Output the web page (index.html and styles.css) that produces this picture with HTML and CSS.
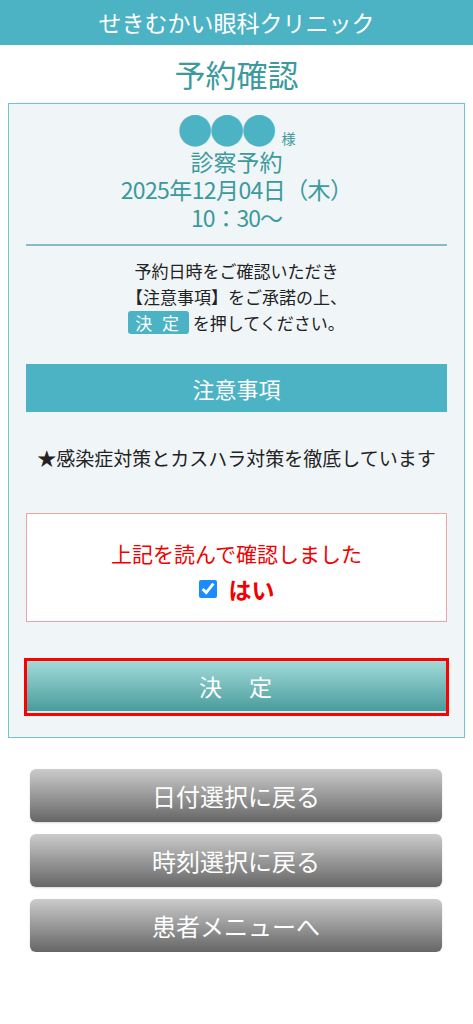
FILE: index.html
```html
<!DOCTYPE html>
<html lang="ja">
<head>
  <meta charset="UTF-8">
  <meta name="viewport" content="width=device-width, initial-scale=1.0">
  <title>予約確認</title>
  <link rel="stylesheet" href="styles.css">
</head>
<body>
  <header>せきむかい眼科クリニック</header>

  <h1 class="page-title">予約確認</h1>

  <main class="card">
    <!-- reservation summary -->
    <div class="summary">
      <p class="name"><span class="dots">●●●</span><span class="sama">様</span></p>
      <p>診察予約</p>
      <p class="date">2025年12月04日（木）</p>
      <p class="time">10：30～</p>
    </div>

    <hr class="divider">

    <p class="guide">
      予約日時をご確認いただき<br>
      【注意事項】をご承諾の上、<br>
      <span class="tag">決 定</span> を押してください。
    </p>

    <h2 class="notice-head">注意事項</h2>
    <p class="notice">★感染症対策とカスハラ対策を徹底しています</p>

    <div class="agree">
      <p class="agree-text">上記を読んで確認しました</p>
      <label class="agree-check"><input type="checkbox" checked> はい</label>
    </div>

    <div class="submit-wrap">
      <button class="submit">決　定</button>
    </div>
  </main>

  <nav class="back-list">
    <button class="back">日付選択に戻る</button>
    <button class="back">時刻選択に戻る</button>
    <button class="back">患者メニューへ</button>
  </nav>
</body>
</html>
```

FILE: styles.css
```css
body {
  margin: 0;
  padding: 0;
  background: #fff;
  font-family: "Noto Sans CJK JP", "Noto Sans", sans-serif;
  color: #222;
}

p {
  margin: 0;
}

header {
  height: 45px;
  line-height: 45px;
  background-color: #4bb3c3;
  color: #fff;
  text-align: center;
  font-size: 23px;
}

.page-title {
  margin: 0;
  height: 58px;
  line-height: 58px;
  text-align: center;
  font-size: 31px;
  font-weight: normal;
  color: #3c9a9c;
}

.card {
  margin: 0 8px;
  padding: 6px 17px 21px;
  background-color: #f0f5f8;
  border: 1px solid #72c4d0;
}

.summary {
  text-align: center;
  color: #3c9a9c;
  font-size: 23px;
  line-height: 28px;
}

.summary .name {
  line-height: 37px;
  height: 37px;
}

.dots {
  font-size: 35px;
  color: #4bb3c3;
  letter-spacing: -3px;
}

.sama {
  font-size: 14px;
  margin-left: 8px;
}

.date {
  letter-spacing: -0.6px;
}

.time {
  letter-spacing: -1px;
}

.divider {
  margin: 13px 0 0;
  border: none;
  height: 2px;
  background-color: #8ab9c9;
}

.guide {
  margin-top: 12px;
  text-align: center;
  font-size: 17px;
  line-height: 26px;
}

.tag {
  display: inline-block;
  padding: 0 7px;
  line-height: 23px;
  background-color: #4bb3c3;
  color: #fff;
  border-radius: 3px;
  letter-spacing: 3px;
}

.notice-head {
  margin: 28px 0 0;
  height: 48px;
  line-height: 48px;
  background-color: #4bb3c3;
  color: #fff;
  text-align: center;
  font-size: 22px;
  font-weight: normal;
}

.notice {
  margin-top: 31px;
  line-height: 30px;
  text-align: center;
  font-size: 19px;
  white-space: nowrap;
}

.agree {
  margin-top: 40px;
  height: 109px;
  padding-top: 6px;
  box-sizing: border-box;
  background: #fff;
  border: 1px solid #eaa6a6;
  text-align: center;
  color: #f20000;
  display: flex;
  flex-direction: column;
  justify-content: center;
  gap: 6px;
}

.agree-text {
  font-size: 21px;
  line-height: 30px;
}

.agree-check {
  font-size: 23px;
  font-weight: bold;
  line-height: 30px;
  display: flex;
  justify-content: center;
  align-items: center;
  gap: 12px;
}

.agree-check input {
  width: 18px;
  height: 18px;
  margin: 0;
  accent-color: #1a8cff;
}

.submit-wrap {
  margin-top: 36px;
  margin-left: -2px;
  margin-right: -2px;
  border: 3px solid #ff0000;
}

.submit {
  display: block;
  width: 100%;
  height: 52px;
  border: none;
  border-bottom: 2px solid #d6eeee;
  background: linear-gradient(#a3dad9, #4a9c9d);
  color: #fff;
  font-family: inherit;
  font-size: 23px;
  letter-spacing: 2px;
}

.back-list {
  margin: 31px 31px 0 30px;
  display: flex;
  flex-direction: column;
  gap: 12px;
}

.back {
  height: 53px;
  border: none;
  border-radius: 6px;
  background: linear-gradient(#cbcbcb, #666);
  color: #fff;
  font-family: inherit;
  font-size: 24px;
  box-shadow: 0 1px 2px rgba(0, 0, 0, 0.15);
}
```
